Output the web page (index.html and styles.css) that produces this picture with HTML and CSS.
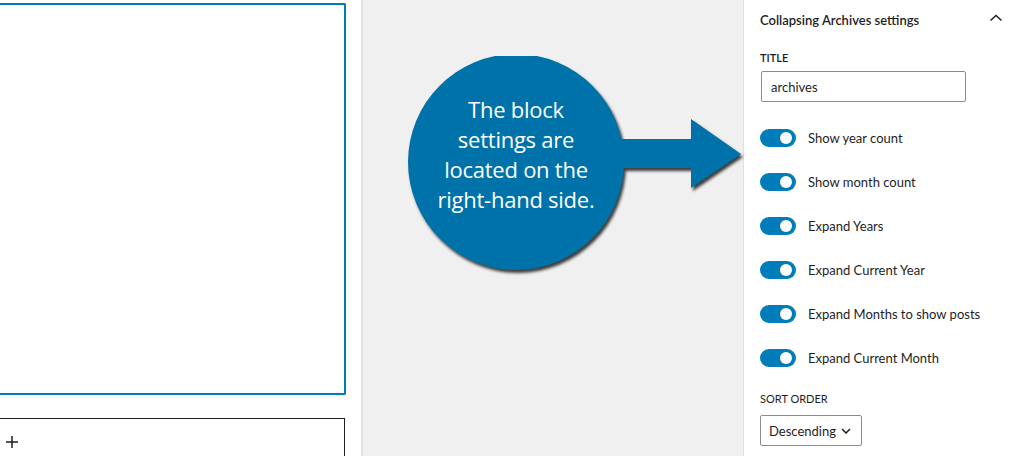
FILE: index.html
```html
<!DOCTYPE html>
<html lang="en">
<head>
    <meta charset="UTF-8">
    <title>Collapsing Archives block settings</title>
    <link rel="stylesheet" href="styles.css">
</head>
<body>
    <div class="editor">
        <div class="block-selected"></div>
        <div class="block-appender">
            <svg class="plus" width="14" height="14" viewBox="0 0 14 14"><path d="M7 1v12M1 7h12" stroke="#1e1e1e" stroke-width="1.5" fill="none"/></svg>
        </div>
    </div>

    <div class="canvas">
        <div class="callout">
            <svg class="callout-shape" width="350" height="230" viewBox="0 0 350 230">
                <g class="shadowed">
                    <circle cx="109" cy="106" r="108" fill="#0072aa"/>
                    <path d="M190 83H284V63L334 98L284 132V112H190Z" fill="#0072aa"/>
                </g>
            </svg>
            <div class="callout-text">The block<br>settings are<br>located on the<br>right-hand side.</div>
        </div>
    </div>

    <div class="sidebar">
        <div class="panel-header">
            <span class="panel-title">Collapsing Archives settings</span>
            <svg width="14" height="8" viewBox="0 0 14 8"><path d="M1.5 6.5L7 1.5L12.5 6.5" stroke="#1e1e1e" stroke-width="1.5" fill="none"/></svg>
        </div>
        <div class="panel-body">
            <div class="field-label">Title</div>
            <div class="text-input">archives</div>

            <div class="toggle-list">
                <div class="toggle-row"><span class="toggle"></span>Show year count</div>
                <div class="toggle-row"><span class="toggle"></span>Show month count</div>
                <div class="toggle-row"><span class="toggle"></span>Expand Years</div>
                <div class="toggle-row"><span class="toggle"></span>Expand Current Year</div>
                <div class="toggle-row"><span class="toggle"></span>Expand Months to show posts</div>
                <div class="toggle-row"><span class="toggle"></span>Expand Current Month</div>
            </div>

            <div class="field-label sort-label">Sort order</div>
            <div class="select">Descending
                <svg width="10" height="6" viewBox="0 0 10 6"><path d="M1 1L5 5L9 1" stroke="#1e1e1e" stroke-width="1.5" fill="none"/></svg>
            </div>
        </div>
    </div>
</body>
</html>
```

FILE: styles.css
```css
body { margin: 0; height: 456px; overflow: hidden; display: flex; font-family: Lato, "Liberation Sans", sans-serif; color: #1e1e1e; background: #fff; }

.editor { width: 363px; flex-shrink: 0; border-right: 2px solid #e2e2e2; background: #fff; padding-top: 3px; box-sizing: border-box; }
.block-selected { width: 346px; height: 392px; box-sizing: border-box; border: 2px solid #007cba; border-left: 0; border-radius: 0 2px 2px 0; }
.block-appender { width: 345px; height: 60px; margin-top: 23px; box-sizing: border-box; border: 1px solid #1e1e1e; border-left: 0; padding: 16px 0 0 5px; }
.plus { display: block; }

.canvas { flex: 1; background: #f0f0f0; position: relative; }
.callout { position: absolute; left: 44px; top: 56px; width: 350px; height: 230px; }
.callout-shape { display: block; }
.shadowed { filter: drop-shadow(2px 3px 1.5px rgba(0,0,0,0.75)); }
.callout-text { position: absolute; left: 0; top: 38px; width: 218px; text-align: center; color: #fff; font-family: "Open Sans", sans-serif; font-size: 22px; line-height: 30px; letter-spacing: -0.25px; }

.sidebar { width: 281px; flex-shrink: 0; border-left: 1px solid #e0e0e0; box-sizing: border-box; background: #fff; font-size: 13px; }
.panel-header { height: 40px; display: flex; align-items: center; justify-content: space-between; padding: 0 21px 0 16px; }
.panel-header svg { margin-top: -5px; }
.panel-title { font-weight: 600; }
.panel-body { padding: 0 16px; }
.field-label { font-size: 11px; font-weight: 600; text-transform: uppercase; margin-top: 11px; line-height: 14px; }
.text-input { width: 205px; height: 31px; box-sizing: border-box; border: 1px solid #8c8c8c; border-radius: 2px; margin: 6px 0 0 1px; padding: 0 9px; display: flex; align-items: center; }

.toggle-list { display: flex; flex-direction: column; gap: 26px; margin-top: 27px; }
.toggle-row { display: flex; align-items: center; gap: 12px; height: 18px; }
.toggle { width: 36px; height: 18px; border-radius: 9px; background: #007cba; position: relative; flex-shrink: 0; }
.toggle::after { content: ""; position: absolute; right: 4px; top: 3px; width: 12px; height: 12px; border-radius: 50%; background: #fff; }

.sort-label { margin-top: 25px; font-weight: 400; }
.select { width: 102px; height: 31px; box-sizing: border-box; border: 1px solid #8c8c8c; border-radius: 2px; margin-top: 9px; padding: 0 10px 0 8px; display: flex; align-items: center; justify-content: space-between; font-size: 13px; }
```
